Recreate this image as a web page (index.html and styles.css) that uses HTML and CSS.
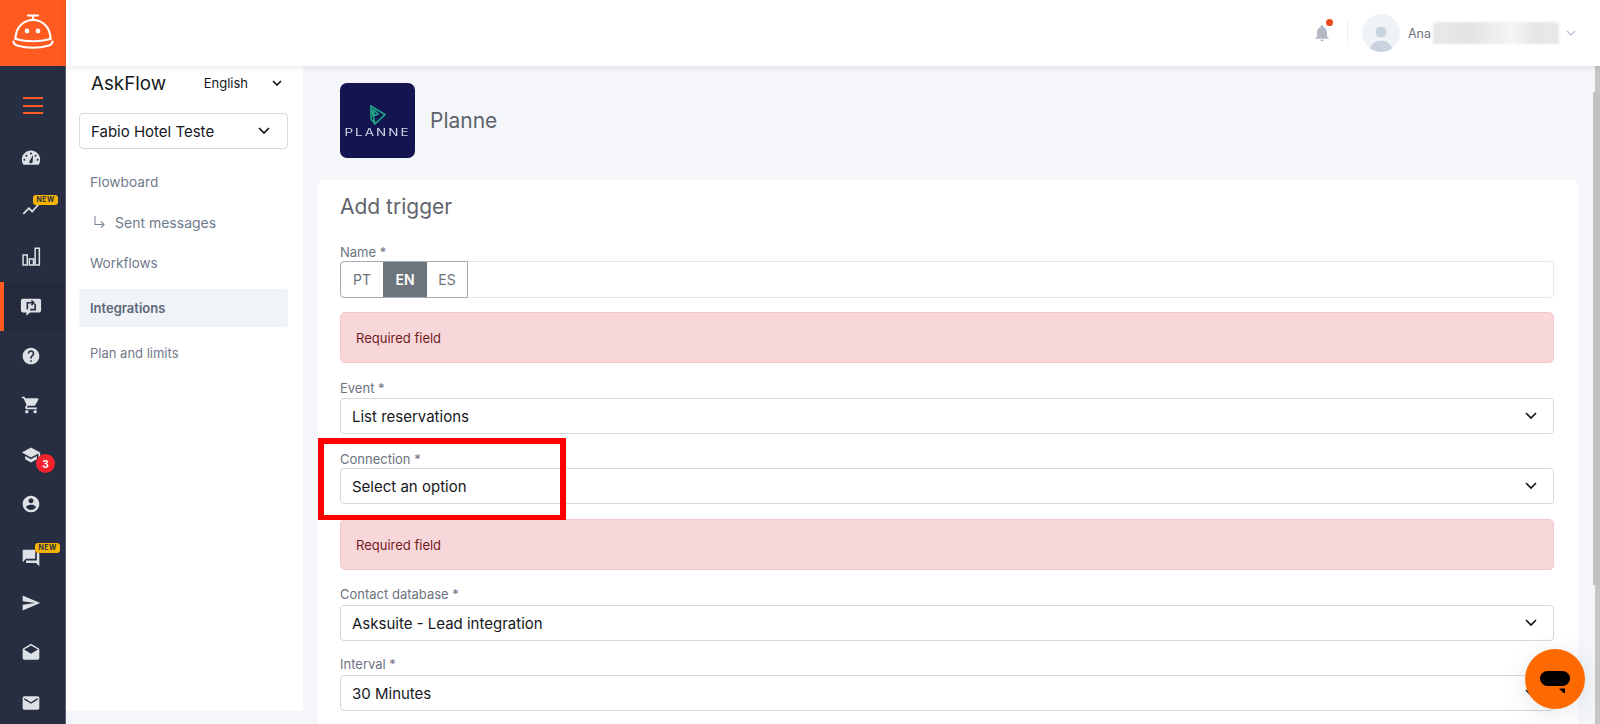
FILE: index.html
```html
<!DOCTYPE html>
<html lang="en">
<head>
<meta charset="utf-8">
<title>Add trigger</title>
<link rel="stylesheet" href="styles.css">
</head>
<body>
<div class="app">
  <aside class="rail">
    <div class="logo">
      <svg width="44" height="38" viewBox="0 0 44 38" fill="none" stroke="#fff" stroke-width="2.200" stroke-linecap="round">
        <path d="M17 1.500h10M22 1.500V6"/>
        <path d="M4.500 25C4.500 14 12 6 22 6s17.500 8 17.500 19"/>
        <path d="M4.500 25Q22 29.500 39.500 25"/>
        <path d="M2.500 27.500Q2.500 30 6 31.500Q22 36 38 31.500Q41.500 30 41.500 27.500"/>
        <circle cx="16" cy="17" r="2.400" fill="#fff" stroke="none"/>
        <circle cx="27" cy="17" r="2.400" fill="#fff" stroke="none"/>
      </svg>
    </div>
    <button class="burger" aria-label="Menu"><span></span><span></span><span></span></button>
    <nav class="rail-list">
      <a class="rail-item"><svg class="ico" viewBox="0 0 24 24"><path fill-rule="evenodd" d="M12 3C5.900 3 1 7.900 1 14c0 2 .5 3.800 1.500 5.400.2.400.6.600 1 .6h17c.4 0 .8-.2 1-.6 1-1.600 1.500-3.400 1.500-5.400 0-6.100-4.900-11-11-11zm0 2.500a1.200 1.200 0 1 1 0 2.400 1.200 1.200 0 0 1 0-2.400zM6.500 8a1.200 1.200 0 1 1 0 2.400 1.200 1.200 0 0 1 0-2.400zM4 13a1.200 1.200 0 1 1 0 2.400A1.200 1.200 0 0 1 4 13zm16 2.400a1.200 1.200 0 1 1 0-2.400 1.200 1.200 0 0 1 0 2.400zM17.500 10.400a1.200 1.200 0 1 1 0-2.400 1.200 1.200 0 0 1 0 2.400zM14 16.500a2 2 0 1 1-3.400-1.500L14.500 8.500z"/></svg></a>
      <a class="rail-item"><svg class="ico shift2" viewBox="0 0 24 24"><path d="M3.500 18.490l6-6.010 4 4L22 6.920l-1.410-1.410-7.090 7.970-4-4L2 16.990z"/></svg><span class="tag tag-a">NEW</span></a>
      <a class="rail-item"><svg class="ico" viewBox="0 0 24 24" fill="none"><path class="ol" d="M2.500 9.500h5v12h-5zM10 14.500h5v7h-5zM17 1.500h5v20h-5z"/></svg></a>
      <a class="rail-item active"><svg class="ico big" viewBox="0 0 24 24"><path d="M3 4h18a2 2 0 0 1 2 2v11a2 2 0 0 1-2 2H11l-4 3.500V19H3a2 2 0 0 1-2-2V6a2 2 0 0 1 2-2z"/><path class="swap" d="M8 15.500V8.500h6.500M12.500 6L15 8.500 12.500 11M16.500 9.500v6.500H11"/></svg></a>
      <a class="rail-item"><svg class="ico" viewBox="0 0 24 24"><path d="M12 2C6.480 2 2 6.480 2 12s4.480 10 10 10 10-4.480 10-10S17.520 2 12 2zm1 17h-2v-2h2v2zm2.070-7.750l-.9.920C13.450 12.900 13 13.500 13 15h-2v-.5c0-1.100.45-2.100 1.170-2.830l1.240-1.260c.37-.36.59-.86.59-1.410 0-1.100-.9-2-2-2s-2 .9-2 2H8c0-2.210 1.790-4 4-4s4 1.790 4 4c0 .88-.36 1.680-.93 2.250z"/></svg></a>
      <a class="rail-item"><svg class="ico" viewBox="0 0 24 24"><path d="M7 18c-1.100 0-1.990.9-1.990 2S5.900 22 7 22s2-.9 2-2-.9-2-2-2zM1 2v2h2l3.600 7.590-1.350 2.450c-.16.28-.25.61-.25.96 0 1.100.9 2 2 2h12v-2H7.420c-.14 0-.25-.11-.25-.25l.03-.12.9-1.630h7.450c.75 0 1.410-.41 1.750-1.030l3.580-6.490c.08-.14.12-.31.12-.48 0-.55-.45-1-1-1H5.210l-.94-2H1zm16 16c-1.100 0-1.990.9-1.990 2s.89 2 1.990 2 2-.9 2-2-.9-2-2-2z"/></svg></a>
      <a class="rail-item"><svg class="ico" viewBox="0 0 24 24"><path d="M5 13.180v4L12 21l7-3.820v-4L12 17l-7-3.820zM12 3L1 9l11 6 9-4.910V17h2V9L12 3z"/></svg><span class="count">3</span></a>
      <a class="rail-item"><svg class="ico" viewBox="0 0 24 24"><path d="M12 2C6.480 2 2 6.480 2 12s4.480 10 10 10 10-4.480 10-10S17.520 2 12 2zm0 3c1.660 0 3 1.340 3 3s-1.340 3-3 3-3-1.340-3-3 1.340-3 3-3zm0 14.200c-2.500 0-4.710-1.280-6-3.220.03-1.990 4-3.080 6-3.080 1.990 0 5.970 1.090 6 3.080-1.290 1.940-3.500 3.220-6 3.220z"/></svg></a>
      <a class="rail-item"><svg class="ico shift4" viewBox="0 0 24 24"><path d="M21 6h-2v9H6v2c0 .55.45 1 1 1h11l4 4V7c0-.55-.45-1-1-1zm-4 6V3c0-.55-.45-1-1-1H3c-.55 0-1 .45-1 1v14l4-4h10c.55 0 1-.45 1-1z"/></svg><span class="tag tag-b">NEW</span></a>
      <a class="rail-item"><svg class="ico" viewBox="0 0 24 24"><path d="M2.010 21L23 12 2.010 3 2 10l15 2-15 2z"/></svg></a>
      <a class="rail-item"><svg class="ico" viewBox="0 0 24 24"><path d="M21.990 8c0-.72-.37-1.350-.94-1.700L12 1 2.950 6.300C2.380 6.650 2 7.280 2 8v10c0 1.100.9 2 2 2h16c1.100 0 2-.9 2-2l-.01-10zM12 13L3.740 7.840 12 3l8.260 4.840L12 13z"/></svg></a>
      <a class="rail-item"><svg class="ico shift1" viewBox="0 0 24 24"><path d="M20 4H4c-1.100 0-1.990.9-1.990 2L2 18c0 1.100.9 2 2 2h16c1.100 0 2-.9 2-2V6c0-1.100-.9-2-2-2zm0 4l-8 5-8-5V6l8 5 8-5v2z"/></svg></a>
    </nav>
  </aside>

  <div class="main">
    <header class="topbar">
      <div class="bell">
        <svg width="20" height="20" viewBox="0 0 24 24" fill="#b5b9c6"><path d="M12 22c1.100 0 2-.9 2-2h-4c0 1.100.89 2 2 2zm6-6v-5c0-3.070-1.640-5.640-4.500-6.320V4c0-.83-.67-1.500-1.500-1.500s-1.500.67-1.500 1.500v.68C7.630 5.360 6 7.920 6 11v5l-2 2v1h16v-1l-2-2z"/></svg>
        <span class="dot"></span>
      </div>
      <span class="divider"></span>
      <div class="avatar">
        <svg width="38" height="38" viewBox="0 0 38 38"><circle cx="19" cy="18" r="5.500" fill="#c9d3e0"/><path d="M7.500 38c0-7 5-11.500 11.500-11.500S30.500 31 30.500 38z" fill="#c9d3e0"/></svg>
      </div>
      <span class="user-name">Ana</span>
      <span class="blurred"></span>
      <svg class="user-caret" width="10" height="6" viewBox="0 0 10 6" fill="none"><path d="M1 1l4 4 4-4" stroke="#b8bccb" stroke-width="1.200"/></svg>
    </header>

    <div class="body">
      <aside class="subnav">
        <div class="sub-head">
          <h2 class="app-title">AskFlow</h2>
          <div class="lang"><span>English</span><svg width="10" height="6" viewBox="0 0 10 6" fill="none"><path d="M1 1l4 4 4-4" stroke="#16181d" stroke-width="1.700"/></svg></div>
        </div>
        <div class="hotel"><span>Fabio Hotel Teste</span><svg width="12" height="8" viewBox="0 0 12 8" fill="none"><path d="M1 1l5 5 5-5" stroke="#16181d" stroke-width="1.700"/></svg></div>
        <ul class="menu">
          <li class="menu-item i1">Flowboard</li>
          <li class="menu-item i2"><svg width="12" height="12" viewBox="0 0 12 12" fill="none"><path d="M2 0v8.500h9M8 5.500l3 3-3 3" stroke="#7d8797" stroke-width="1.100"/></svg><span>Sent messages</span></li>
          <li class="menu-item i3">Workflows</li>
          <li class="menu-item selected">Integrations</li>
          <li class="menu-item i5">Plan and limits</li>
        </ul>
      </aside>

      <main class="content">
        <section class="brand">
          <div class="brand-logo">
            <svg width="16" height="20" viewBox="0 0 16 20" fill="none"><path d="M1 1l14 8.500L5 19zM1 1v13l4 5M4 5v6l4-2z" stroke="#1fa386" stroke-width="1.600"/></svg>
            <span class="brand-mark">PLANNE</span>
          </div>
          <h1 class="brand-name">Planne</h1>
        </section>

        <section class="card">
          <h2 class="card-title">Add trigger</h2>

          <label class="label lb-name">Name *</label>
          <div class="name-field">
            <div class="seg">
              <span class="seg-btn first">PT</span>
              <span class="seg-btn on">EN</span>
              <span class="seg-btn last">ES</span>
            </div>
          </div>
          <div class="alert">Required field</div>

          <label class="label lb-event">Event *</label>
          <div class="select"><span>List reservations</span><svg width="12" height="8" viewBox="0 0 12 8" fill="none"><path d="M1 1l5 5 5-5" stroke="#16181d" stroke-width="1.700"/></svg></div>

          <label class="label lb-conn">Connection *</label>
          <div class="select"><span>Select an option</span><svg width="12" height="8" viewBox="0 0 12 8" fill="none"><path d="M1 1l5 5 5-5" stroke="#16181d" stroke-width="1.700"/></svg></div>
          <div class="alert alert-2">Required field</div>

          <label class="label lb-db">Contact database *</label>
          <div class="select"><span>Asksuite - Lead integration</span><svg width="12" height="8" viewBox="0 0 12 8" fill="none"><path d="M1 1l5 5 5-5" stroke="#16181d" stroke-width="1.700"/></svg></div>

          <label class="label lb-int">Interval *</label>
          <div class="select"><span>30 Minutes</span><svg width="12" height="8" viewBox="0 0 12 8" fill="none"><path d="M1 1l5 5 5-5" stroke="#16181d" stroke-width="1.700"/></svg></div>
        </section>
      </main>

      <div class="scrollbar"><span class="thumb"></span></div>
    </div>
  </div>
</div>

<div class="highlight"></div>
<button class="chat-fab" aria-label="Chat">
  <svg width="32" height="24" viewBox="0 0 32 24"><rect x="1" y="2" width="30" height="15" rx="7.500" fill="#000"/><path d="M20 19.500h6v6z" fill="#000"/></svg>
</button>
</body>
</html>
```

FILE: styles.css
```css
* { box-sizing: border-box; }
html, body { margin: 0; height: 100%; overflow: hidden; }
body { font-family: Inter, "Liberation Sans", sans-serif; background: #f4f6fa; color: #16181d; }
h1, h2, ul { margin: 0; padding: 0; list-style: none; font-weight: 400; }

.app { display: flex; height: 724px; }

/* dark rail */
.rail { width: 66px; flex: none; background: #282e42; border-right: 1px solid #5a6070; }
.logo { height: 66px; background: #ff5a1f; display: flex; align-items: center; justify-content: center; margin-right: -1px; }
.burger { display: flex; flex-direction: column; gap: 5.500px; width: 100%; height: 67px; padding: 31px 0 0 23px; background: none; border: 0; }
.burger span { width: 20px; height: 2px; background: #ff5a1f; display: block; }
.rail-item { position: relative; display: flex; align-items: center; justify-content: center; height: 49.500px; padding-right: 3px; }
.rail-item.active { background: #242a3b; border-left: 4px solid #ff5a1f; padding-right: 7px; }
.ico { width: 20px; height: 20px; fill: #dce1e5; }
.ico.big { width: 22px; height: 22px; }
.shift1 { margin-top: 2px; }
.shift2 { margin-top: 4px; }
.shift4 { margin-top: 8px; }
.ol { stroke: #dce1e5; stroke-width: 1.800; fill: none; }
.swap { fill: none; stroke: #282e42; stroke-width: 1.800; }
.tag { position: absolute; background: #f7b500; color: #282e42; font-size: 7px; font-weight: 700; letter-spacing: .5px; line-height: 10.500px; border-radius: 3px; padding: 0 3.500px; }
.tag-a { top: 12px; left: 33px; }
.tag-b { top: 13.500px; left: 35px; }
.count { position: absolute; top: 24px; left: 36px; width: 19px; height: 19px; border-radius: 50%; background: #f5222d; color: #fff; font-size: 10px; font-weight: 700; display: flex; align-items: center; justify-content: center; }

/* top bar */
.main { flex: 1; min-width: 0; display: flex; flex-direction: column; }
.topbar { height: 66px; flex: none; background: #fff; box-shadow: 0 1px 6px rgba(40,46,66,.12); position: relative; z-index: 2; display: flex; align-items: center; padding-left: 1246px; }
.bell { position: relative; width: 20px; height: 20px; }
.dot { position: absolute; top: -4px; right: -1px; width: 7px; height: 7px; border-radius: 50%; background: #e8481c; }
.divider { width: 1px; height: 26px; background: #eef0f4; margin: 0 14px 0 15px; }
.avatar { width: 38px; height: 38px; border-radius: 50%; background: #eff2f7; overflow: hidden; margin-right: 8px; }
.avatar svg { display: block; }
.user-name { font-size: 12.500px; color: #6d7280; width: 25px; }
.blurred { width: 126px; height: 22px; background: linear-gradient(90deg, #e9e9e9 0%, #e3e3e3 30%, #f1f1f1 55%, #f6f6f6 62%, #e6e6e6 80%, #e9e9e9 100%); filter: blur(1px); }
.user-caret { margin-left: 7px; }

.body { flex: 1; display: flex; min-height: 0; }

/* secondary nav */
.subnav { width: 237px; flex: none; height: 645px; background: #fff; padding: 0 15px 0 13px; }
.sub-head { display: flex; align-items: center; padding: 4px 6px 0 12px; height: 32px; }
.app-title { font-size: 18.800px; line-height: 24px; color: #16181d; flex: 1; }
.lang { display: flex; align-items: center; gap: 24px; font-size: 13px; line-height: 18px; margin-top: -2px; }
.hotel { margin-top: 15px; height: 36px; border: 1px solid #d4d9e0; border-radius: 4px; display: flex; align-items: center; justify-content: space-between; padding: 0 17px 0 11px; font-size: 15px; }
.menu { margin-top: 15px; }
.menu-item { font-size: 13px; color: #6f7a8a; padding-left: 11px; display: flex; align-items: center; }
.i1 { height: 36px; font-size: 13.700px; }
.i2 { height: 40px; margin-top: 2px; gap: 10px; padding-left: 14px; font-size: 14px; }
.i3 { height: 36px; margin-top: 3px; font-size: 13.500px; }
.selected { height: 38px; margin-top: 8px; background: #f0f3f8; border-radius: 4px; font-weight: 600; color: #5d6776; }
.i5 { height: 36px; margin-top: 8px; }

/* content */
.content { flex: 1; min-width: 0; padding: 0 0 0 15px; overflow: hidden; }
.brand { display: flex; align-items: center; height: 114px; padding: 0 0 6px 22px; gap: 15px; }
.brand-logo { width: 75px; height: 75px; border-radius: 7px; background: #141450; display: flex; flex-direction: column; align-items: center; padding-top: 22px; gap: 3px; }
.brand-mark { color: #d3d8ea; font-size: 10px; line-height: 9px; letter-spacing: 1.500px; transform: scaleX(1.350); }
.brand-name { font-size: 21px; color: #5f646c; }
.card { width: 1260px; height: 600px; background: #fff; border-radius: 6px 6px 0 0; padding: 0 24px 0 22px; }
.card-title { font-size: 21px; line-height: 28px; color: #5f646c; padding-top: 13px; height: 64px; }
.label { display: block; font-size: 13px; line-height: 16px; color: #6d7280; height: 17px; }
.lb-event { margin-top: 17px; height: 18px; }
.lb-conn { margin-top: 17px; }
.lb-db { margin-top: 16px; height: 19px; }
.lb-int { margin-top: 15px; height: 19px; }
.name-field { height: 37px; border: 1px solid #e6e8ec; border-radius: 4px; }
.seg { display: inline-flex; height: 37px; margin: -1px 0 0 -1px; border: 1px solid #a6abb1; border-radius: 4px 0 0 4px; }
.seg-btn { width: 42px; display: flex; align-items: center; justify-content: center; font-size: 14px; color: #6c757d; }
.seg-btn.on { background: #6c757d; color: #fff; font-weight: 600; width: 44px; }
.seg-btn.last { width: 40px; }
.alert { height: 51px; margin-top: 14px; background: #f8d7da; border: 1px solid #f5c6cb; border-radius: 5px; font-size: 13px; color: #721c24; display: flex; align-items: center; padding-left: 15px; }
.alert-2 { margin-top: 15px; }
.select { height: 36px; border: 1px solid #d4d9e0; border-radius: 4px; display: flex; align-items: center; justify-content: space-between; padding: 0 16px 0 11px; font-size: 15px; }

.scrollbar { width: 7px; flex: none; background: linear-gradient(90deg, transparent 2px, #c6c6c6 2px); }
.thumb { display: block; height: 493px; margin-top: 26px; background: #c1c1c1; }

/* overlays */
.highlight { position: absolute; left: 318px; top: 438px; width: 248px; height: 82px; border: 6px solid #f00; border-bottom-width: 5px; }
.chat-fab { position: absolute; left: 1525px; top: 649px; width: 60px; height: 60px; border-radius: 50%; background: #ff6a00; border: 0; padding: 3px 0 0 0; display: flex; align-items: center; justify-content: center; box-shadow: 0 4px 24px rgba(40,60,70,.12); }
```
